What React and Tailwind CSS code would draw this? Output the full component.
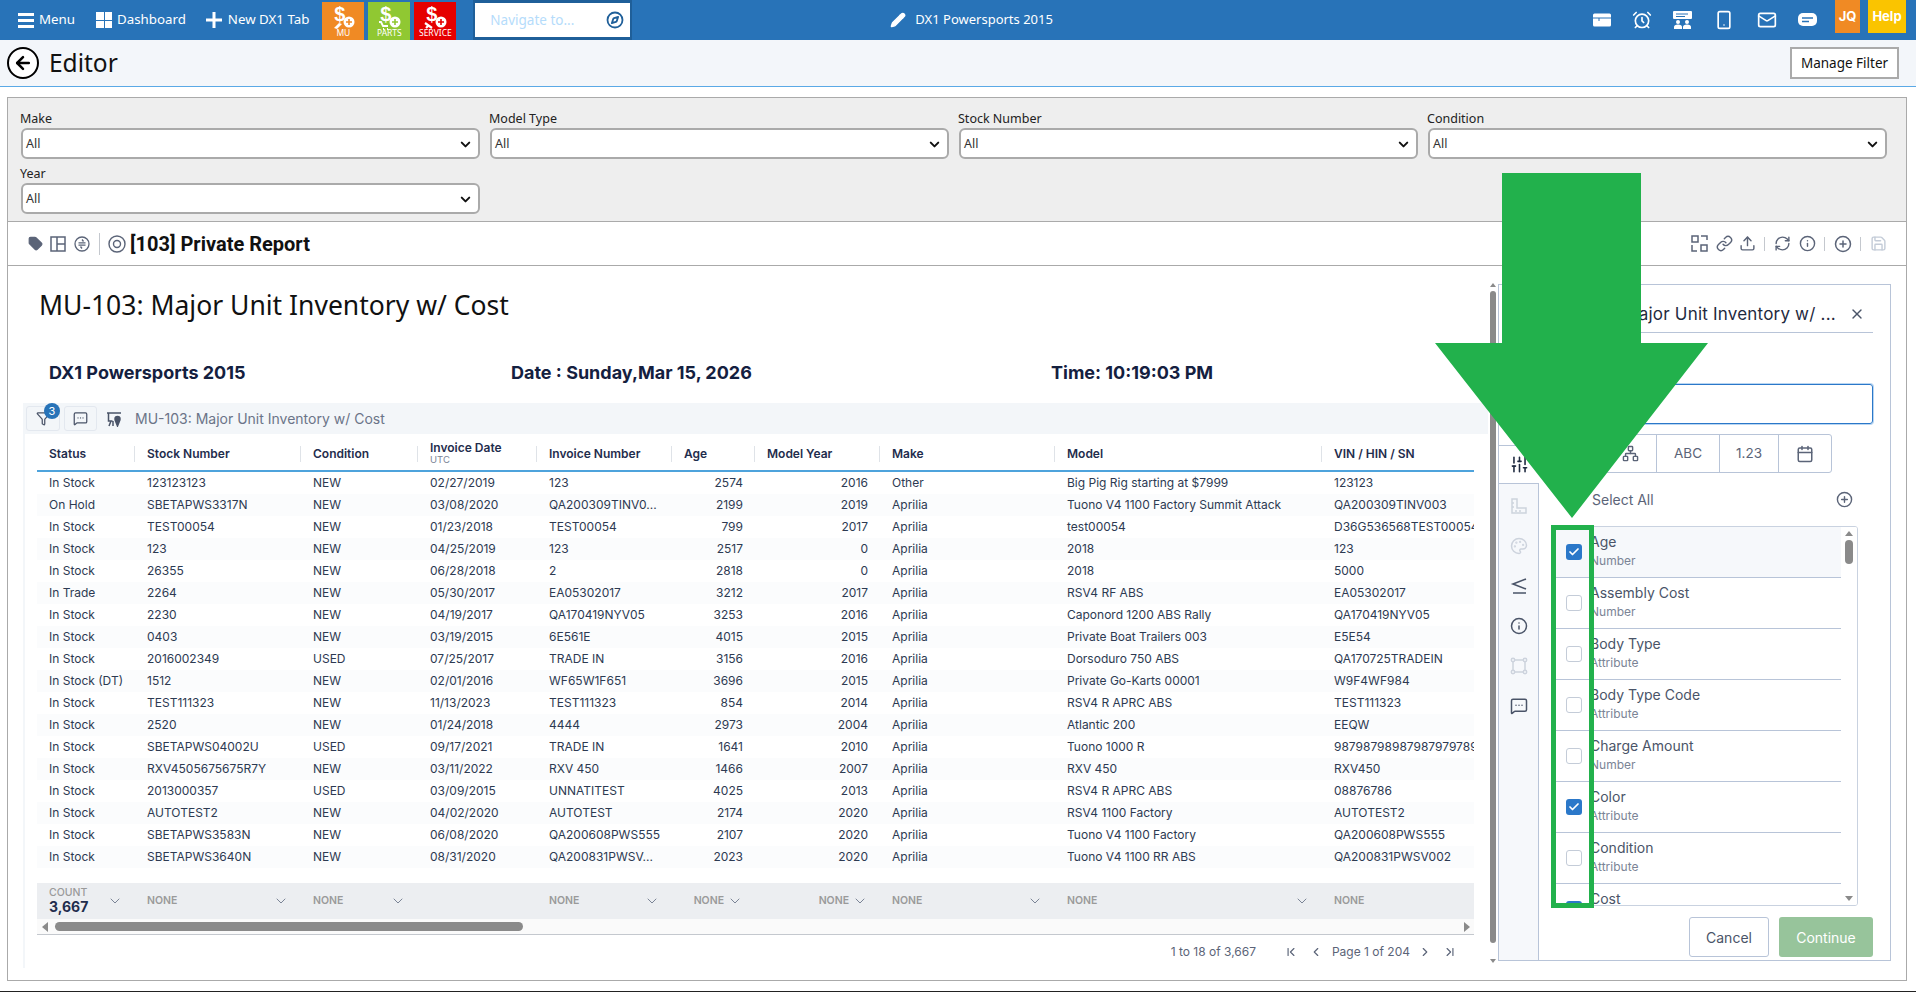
import React from "react";
import {
  AlarmClock, Smartphone, Mail, Compass, Link, Upload, RefreshCw, Info, CirclePlus, Save, X, Network, Calendar,
  SlidersVertical, Palette, MessageSquareMore, Funnel, ChevronDown, ChevronFirst, ChevronLast,
  ChevronLeft, ChevronRight, Check, ArrowLeft, Pencil, Tag,
} from "lucide-react";

const rows = [
  ["In Stock","123123123","NEW","02/27/2019","123","2574","2016","Other","Big Pig Rig starting at $7999","123123"],
  ["On Hold","SBETAPWS3317N","NEW","03/08/2020","QA200309TINV0...","2199","2019","Aprilia","Tuono V4 1100 Factory Summit Attack","QA200309TINV003"],
  ["In Stock","TEST00054","NEW","01/23/2018","TEST00054","799","2017","Aprilia","test00054","D36G536568TEST00054"],
  ["In Stock","123","NEW","04/25/2019","123","2517","0","Aprilia","2018","123"],
  ["In Stock","26355","NEW","06/28/2018","2","2818","0","Aprilia","2018","5000"],
  ["In Trade","2264","NEW","05/30/2017","EA05302017","3212","2017","Aprilia","RSV4 RF ABS","EA05302017"],
  ["In Stock","2230","NEW","04/19/2017","QA170419NYV05","3253","2016","Aprilia","Caponord 1200 ABS Rally","QA170419NYV05"],
  ["In Stock","0403","NEW","03/19/2015","6E561E","4015","2015","Aprilia","Private Boat Trailers 003","E5E54"],
  ["In Stock","2016002349","USED","07/25/2017","TRADE IN","3156","2016","Aprilia","Dorsoduro 750 ABS","QA170725TRADEIN"],
  ["In Stock (DT)","1512","NEW","02/01/2016","WF65W1F651","3696","2015","Aprilia","Private Go-Karts 00001","W9F4WF984"],
  ["In Stock","TEST111323","NEW","11/13/2023","TEST111323","854","2014","Aprilia","RSV4 R APRC ABS","TEST111323"],
  ["In Stock","2520","NEW","01/24/2018","4444","2973","2004","Aprilia","Atlantic 200","EEQW"],
  ["In Stock","SBETAPWS04002U","USED","09/17/2021","TRADE IN","1641","2010","Aprilia","Tuono 1000 R","98798798987987979789"],
  ["In Stock","RXV4505675675R7Y","NEW","03/11/2022","RXV 450","1466","2007","Aprilia","RXV 450","RXV450"],
  ["In Stock","2013000357","USED","03/09/2015","UNNATITEST","4025","2013","Aprilia","RSV4 R APRC ABS","08876786"],
  ["In Stock","AUTOTEST2","NEW","04/02/2020","AUTOTEST","2174","2020","Aprilia","RSV4 1100 Factory","AUTOTEST2"],
  ["In Stock","SBETAPWS3583N","NEW","06/08/2020","QA200608PWS555","2107","2020","Aprilia","Tuono V4 1100 Factory","QA200608PWS555"],
  ["In Stock","SBETAPWS3640N","NEW","08/31/2020","QA200831PWSV...","2023","2020","Aprilia","Tuono V4 1100 RR ABS","QA200831PWSV002"],
];

const heads = ["Status","Stock Number","Condition","Invoice Date","Invoice Number","Age","Model Year","Make","Model","VIN / HIN / SN"];
const fields = [
  ["Age","Number",true],["Assembly Cost","Number",false],["Body Type","Attribute",false],["Body Type Code","Attribute",false],
  ["Charge Amount","Number",false],["Color","Attribute",true],["Condition","Attribute",false],["Cost","Number",true],
];
const gridCols = "grid grid-cols-[98px_166px_117px_119px_135px_83px_125px_175px_267px_152px]";

function Tile({ bg, label, kind, stroke }) {
  return (
    <div className={`relative flex h-[38px] w-[42px] flex-col items-center justify-end ${bg} pb-[2px]`}>
      <span className="absolute left-[12px] top-[2px] font-['Liberation_Sans'] text-[20px] font-bold leading-[20px] text-white">$</span>
      <svg className="absolute left-[10px] top-[13px]" width="28" height="16" viewBox="0 0 28 16">
        {kind === "mu" && <path d="M2 13 L7 8 L10 9 L5 14Z" fill="#fff" />}
        {kind === "parts" && <path d="M1 7h2l2 4h5M5 14h1M9 14h1" stroke="#fff" strokeWidth="1.800" fill="none" />}
        {kind === "service" && <path d="M1 8l7 5M2 13l3-3" stroke="#fff" strokeWidth="2.200" fill="none" />}
        <circle cx="17" cy="7" r="5.500" fill="#fff" />
        <path d="M14 7h6M17 4v6" stroke={stroke} strokeWidth="1.600" />
      </svg>
      <span className="font-['Noto_Sans'] text-[8.500px] leading-[10px] text-white">{label}</span>
    </div>
  );
}

function SelectField({ label }) {
  return (
    <div className="flex flex-col">
      <label className="-ml-[1px] h-[20px] pt-[1px] font-['Noto_Sans'] text-[12.500px] leading-[19px] text-[#222]">{label}</label>
      <div className="flex h-[31px] items-center justify-between rounded-md border-2 border-[#aaaaaa] bg-white pl-[3px] pr-[5px] pt-[1px] font-['Noto_Sans'] text-[12.500px] text-[#333]">
        <span>All</span>
        <ChevronDown size={15} strokeWidth={3.200} className="text-[#111]" />
      </div>
    </div>
  );
}

function Frame({ size = 18, color = "#cdd3dd" }) {
  return (
    <svg width={size} height={size} viewBox="0 0 18 18" fill="none" stroke={color} strokeWidth="1.500">
      <rect x="3" y="3" width="12" height="12" />
      <circle cx="3" cy="3" r="1.700" fill="#f6f8fb" /><circle cx="15" cy="3" r="1.700" fill="#f6f8fb" />
      <circle cx="3" cy="15" r="1.700" fill="#f6f8fb" /><circle cx="15" cy="15" r="1.700" fill="#f6f8fb" />
    </svg>
  );
}

function FieldRow({ name, type, checked, first }) {
  return (
    <div className={`flex h-[51px] shrink-0 items-start border-b border-[#b8c4d8] pl-[13px] ${first ? "bg-[#f6f8fb]" : "bg-white"}`}>
      {checked ? (
        <div className="mt-[17px] flex h-[16px] w-[16px] items-center justify-center rounded-[3px] bg-[#2b78c9]">
          <Check size={12} strokeWidth={3.500} className="text-white" />
        </div>
      ) : (
        <div className="mt-[17px] h-[16px] w-[16px] rounded-[3px] border border-[#c4ccd8] bg-white" />
      )}
      <div className="ml-[8px] pt-[6px] font-[Inter]">
        <div className="text-[14px] leading-[18px] text-[#4a5468]">{name}</div>
        <div className="mt-[2px] text-[12px] leading-[16px] text-[#7b8496]">{type}</div>
      </div>
    </div>
  );
}

function SidePanel() {
  return (
    <div className="flex h-[677px] w-[393px] shrink-0 border border-[#b8c4d8] bg-white">
      <div className="flex w-[40px] shrink-0 flex-col">
        <div className="h-[160px] shrink-0" />
        <div className="flex h-[39px] shrink-0 items-center justify-center border-y border-[#b8c4d8]">
          <SlidersVertical size={19} className="text-[#1f2a40]" />
        </div>
        <div className="flex flex-1 flex-col items-center gap-[22px] border-r border-[#b8c4d8] bg-[#f6f8fb] pt-[13px]">
          <svg width="18" height="18" viewBox="0 0 18 18" fill="none" stroke="#cdd3dd" strokeWidth="1.500">
            <path d="M2 2h5v9h9v5H2z" /><path d="M2 6h2M2 10h2M6 13v2M10 13v2" />
          </svg>
          <Palette size={18} className="text-[#cdd3dd]" />
          <svg width="18" height="18" viewBox="0 0 18 18" fill="none" stroke="#4a5468" strokeWidth="1.600">
            <path d="M16 2 3 7l13 5M3 16h13" />
          </svg>
          <Info size={18} className="text-[#4a5468]" />
          <Frame />
          <MessageSquareMore size={18} className="text-[#4a5468]" />
        </div>
      </div>
      <div className="flex min-w-0 flex-1 flex-col pl-[13px] pr-[17px] font-[Inter]">
        <div className="flex h-[48px] shrink-0 items-end justify-between border-b border-[#b8c4d8] pb-[6px] pr-[8px] text-[17px] leading-[24px] tracking-[0.2px] text-[#1f2a40]">
          <span className="-ml-[4px] whitespace-nowrap">MU-103: Major Unit Inventory w/ ...</span>
          <X size={16} className="mb-[4px] text-[#4a5468]" />
        </div>
        <div className="mt-[51px] h-[40px] shrink-0 rounded-[3px] border border-[#2b78c9] shadow-[0_0_0_1px_#b9d6f2]" />
        <div className="mt-[10px] flex h-[39px] w-[280px] shrink-0 rounded-[3px] border border-[#b8c4d8] text-[13.500px] text-[#5b6478]">
          <div className="w-[52px] border-r border-[#b8c4d8]" />
          <div className="flex w-[52px] items-center justify-center border-r border-[#b8c4d8]"><Network size={17} /></div>
          <div className="flex w-[63px] items-center justify-center border-r border-[#b8c4d8]">ABC</div>
          <div className="flex w-[59px] items-center justify-center border-r border-[#b8c4d8]">1.23</div>
          <div className="flex flex-1 items-center justify-center"><Calendar size={18} /></div>
        </div>
        <div className="flex h-[53px] shrink-0 items-center justify-between pl-[40px] pr-[20px] text-[14px] text-[#5b6478]">
          <span>Select All</span>
          <CirclePlus size={17} />
        </div>
        <div className="flex h-[380px] w-[306px] shrink-0 overflow-hidden rounded-[3px] border border-[#c9d2e0]">
          <div className="flex min-w-0 flex-1 flex-col">
            {fields.map((f, i) => <FieldRow key={f[0]} name={f[0]} type={f[1]} checked={f[2]} first={i === 0} />)}
          </div>
          <div className="flex w-[16px] shrink-0 flex-col items-center bg-white pt-[3px]">
            <div className="mt-[1px] h-0 w-0 border-x-[4px] border-b-[5px] border-x-transparent border-b-[#8a8a8a]" />
            <div className="mt-[4px] h-[24px] w-[8px] rounded-full bg-[#8a8a8a]" />
            <div className="mt-auto mb-[4px] h-0 w-0 border-x-[4px] border-t-[5px] border-x-transparent border-t-[#8a8a8a]" />
          </div>
        </div>
        <div className="mt-[11px] flex shrink-0 justify-end gap-[10px] text-[14px]">
          <button className="h-[40px] w-[80px] rounded-[3px] border border-[#b8c4d8] bg-white text-[#4a5468]">Cancel</button>
          <button className="h-[40px] w-[94px] rounded-[3px] bg-[#97c49b] text-white">Continue</button>
        </div>
      </div>
    </div>
  );
}

function DataTable() {
  return (
    <div className="ml-[15px] flex w-[1465px] flex-col border-l-2 border-[#f3f6f9] font-[Inter]">
      <div className="flex h-[31px] items-center bg-[#f3f6f9]">
        <div className="relative ml-[1px] flex h-[25px] w-[34px] items-center justify-center rounded-[3px] border border-[#e3e8ef]">
          <Funnel size={15} className="text-[#4a5468]" />
          <span className="absolute right-[-1px] top-[-4px] flex h-[16px] w-[16px] items-center justify-center rounded-full bg-[#2873b8] text-[11px] text-white">3</span>
        </div>
        <div className="ml-[4px] flex h-[25px] w-[33px] items-center justify-center rounded-[3px] border border-[#e3e8ef]">
          <MessageSquareMore size={15} className="text-[#4a5468]" />
        </div>
        <svg className="ml-[9px]" width="16" height="16" viewBox="0 0 16 16" fill="none" stroke="#4a5468" strokeWidth="1.500">
          <path d="M1 2h14M2.500 2v8h4M5 10l-2 5M7 10v5" />
          <circle cx="11.500" cy="8" r="2.500" fill="#4a5468" />
          <path d="M9.500 10l2 5 2-5" fill="#4a5468" />
        </svg>
        <span className="ml-[13px] text-[14px] text-[#6b7488]">MU-103: Major Unit Inventory w/ Cost</span>
      </div>
      <div className="ml-[12px] w-[1437px]">
        <div className={`${gridCols} h-[38px] items-center border-b-2 border-[#4ea3dc] pt-[3px]`}>
          {heads.map((h, i) => (
            <div key={h} className={`flex h-[16px] items-center pl-[12px] text-[12px] font-semibold text-[#1f2d4d] ${i < 9 ? "border-r border-[#dfe3e8]" : ""}`}>
              {h === "Invoice Date" ? (
                <div className="leading-[12px]">
                  <div>{h}</div>
                  <div className="text-[9.500px] font-normal text-[#7b8496]">UTC</div>
                </div>
              ) : h}
            </div>
          ))}
        </div>
        {rows.map((r, i) => (
          <div key={i} className={`${gridCols} h-[22px] items-center text-[12px] text-[#2d3a52] ${i % 2 ? "bg-[#fbfcfd]" : "bg-white"}`}>
            {r.map((c, j) => (
              <div key={j} className={`overflow-hidden whitespace-nowrap pl-[12px] ${j === 5 || j === 6 ? "pr-[12px] text-right" : ""}`}>{c}</div>
            ))}
          </div>
        ))}
        <div className={`${gridCols} mt-[15px] h-[36px] items-center bg-[#eceef1] text-[10.500px] font-semibold text-[#9a9a9a]`}>
          <div className="flex items-center justify-between pl-[12px] pr-[12px]">
            <div className="leading-[12px]">
              <div className="font-medium">COUNT</div>
              <div className="text-[14px] font-bold leading-[16px] text-[#1f2d4d]">3,667</div>
            </div>
            <ChevronDown size={16} strokeWidth={1.500} className="text-[#7b8496]" />
          </div>
          {[1,2,3,4,5,6,7,8,9].map((j) => (
            <div key={j} className={`flex items-center pl-[12px] pr-[12px] ${j === 5 || j === 6 ? "justify-end gap-[3px]" : "justify-between"}`}>
              {j !== 3 && <span>NONE</span>}
              {j !== 3 && j !== 9 && <ChevronDown size={16} strokeWidth={1.500} className="text-[#7b8496]" />}
            </div>
          ))}
        </div>
        <div className="flex h-[16px] items-center border-b border-[#c4c8ce] bg-[#fafafa] pl-[5px] pr-[4px]">
          <div className="h-0 w-0 border-y-[5px] border-r-[6px] border-y-transparent border-r-[#8a8a8a]" />
          <div className="ml-[7px] h-[9px] w-[468px] rounded-full bg-[#8a8a8a]" />
          <div className="ml-auto h-0 w-0 border-y-[5px] border-l-[6px] border-y-transparent border-l-[#8a8a8a]" />
        </div>
        <div className="flex h-[33px] items-center justify-end pr-[17px] text-[12px] text-[#5b6478]">
          <span>1 to 18 of 3,667</span>
          <ChevronFirst size={14} className="ml-[28px]" />
          <ChevronLeft size={14} className="ml-[11px]" />
          <span className="ml-[9px]">Page 1 of 204</span>
          <ChevronRight size={14} className="ml-[8px]" />
          <ChevronLast size={14} className="ml-[11px]" />
        </div>
      </div>
    </div>
  );
}

export default function App() {
  return (
    <div className="relative h-[992px] w-[1916px] overflow-hidden border-b border-[#222] bg-white font-['Noto_Sans']">
      <header className="flex h-[40px] items-start bg-[#2873b8] text-white">
        <div className="flex h-[40px] items-center text-[13.300px]">
          <div className="ml-[18px] flex w-[16px] flex-col gap-[3px]">
            <span className="h-[3px] bg-white" /><span className="h-[3px] bg-white" /><span className="h-[3px] bg-white" />
          </div>
          <span className="ml-[5px]">Menu</span>
          <div className="ml-[21px] grid h-[16px] w-[16px] grid-cols-2 gap-[1px]">
            <span className="bg-white" /><span className="bg-white" /><span className="bg-white" /><span className="bg-white" />
          </div>
          <span className="ml-[5px]">Dashboard</span>
          <svg className="ml-[20px]" width="16" height="16" viewBox="0 0 16 16"><path d="M6.500 0h3v6.500H16v3H9.500V16h-3V9.500H0v-3h6.500z" fill="#fff" /></svg>
          <span className="ml-[6px]">New DX1 Tab</span>
        </div>
        <div className="ml-[13px] mt-[2px] flex gap-[4px]">
          <Tile bg="bg-[#f08a24]" label="MU" kind="mu" stroke="#f08a24" />
          <Tile bg="bg-[#90c832]" label="PARTS" kind="parts" stroke="#90c832" />
          <Tile bg="bg-[#e50000]" label="SERVICE" kind="service" stroke="#e50000" />
        </div>
        <div className="ml-[17px] flex h-[40px] w-[159px] items-center justify-between border-x-2 border-t-[3px] border-b-[3px] border-[#1f5f99] bg-white pl-[15px] pr-[6px]">
          <span className="text-[13.500px] text-[#b5dcfb]">Navigate to...</span>
          <Compass size={18} className="text-[#1f5f99]" strokeWidth={2.400} />
        </div>
        <div className="ml-[258px] flex h-[40px] items-center text-[13px]">
          <Pencil size={16} fill="#fff" className="text-white" />
          <span className="ml-[9px]">DX1 Powersports 2015</span>
        </div>
        <div className="ml-auto flex h-[40px] items-center pr-[10px]">
          <svg width="18" height="14" viewBox="0 0 18 14"><rect y="0.500" width="18" height="13" rx="1.500" fill="#fff" /><path d="M0 5h18M6 5v3" stroke="#2873b8" /></svg>
          <AlarmClock size={20} className="ml-[21px]" />
          <svg className="ml-[21px]" width="19" height="18" viewBox="0 0 19 18">
            <rect width="19" height="8" rx="1" fill="#fff" /><path d="M3 3h12M3 5.500h9" stroke="#2873b8" />
            <circle cx="5" cy="11" r="2" fill="#fff" /><circle cx="14" cy="11" r="2" fill="#fff" />
            <path d="M1 18v-2q0-2.500 4-2.500t4 2.500v2zM10 18v-2q0-2.500 4-2.500t4 2.500v2z" fill="#fff" />
          </svg>
          <Smartphone size={20} className="ml-[22px]" />
          <Mail size={20} className="ml-[23px]" />
          <svg className="ml-[21px]" width="19" height="15" viewBox="0 0 19 15"><rect width="19" height="13" rx="5" fill="#fff" /><path d="M4 5h11M4 8.500h7" stroke="#2873b8" strokeWidth="1.400" /></svg>
          <div className="ml-[18px] mb-[7px] flex h-[33px] w-[25px] items-center justify-center bg-[#f08a24] font-[Inter] text-[13px] font-bold">JQ</div>
          <div className="ml-[8px] mb-[7px] flex h-[33px] w-[38px] items-center justify-center bg-[#fac400] font-[Inter] text-[13px] font-bold">Help</div>
        </div>
      </header>

      <div className="flex h-[47px] items-center border-b border-[#5aa9e6] bg-[#f3f6fa] pl-[7px] pr-[17px]">
        <div className="flex h-[32px] w-[32px] items-center justify-center rounded-full border-2 border-black bg-white">
          <ArrowLeft size={20} strokeWidth={3} className="text-black" />
        </div>
        <span className="ml-[10px] text-[24.500px] text-[#111]">Editor</span>
        <button className="ml-auto h-[32px] w-[109px] border-2 border-[#aaaaaa] bg-white text-[13.500px] text-[#111]">Manage Filter</button>
      </div>

      <div className="ml-[7px] mt-[10px] w-[1900px] border border-[#aaaaaa]">
        <div className="grid h-[124px] grid-cols-4 content-start gap-x-[10px] gap-y-[4px] border-b border-[#aaaaaa] bg-[#eeeeee] pl-[13px] pr-[19px] pt-[10px]">
          <SelectField label="Make" />
          <SelectField label="Model Type" />
          <SelectField label="Stock Number" />
          <SelectField label="Condition" />
          <SelectField label="Year" />
        </div>

        <div className="flex h-[44px] items-center border-b border-[#aaaaaa] pl-[20px] pr-[19px] text-[#5b6478]">
          <Tag size={15} fill="#5b6478" />
          <svg className="ml-[7px]" width="16" height="16" viewBox="0 0 16 16" fill="none" stroke="#5b6478" strokeWidth="1.500"><rect x="1" y="1" width="14" height="14" /><path d="M7 1v14M7 8h8" /></svg>
          <svg className="ml-[8px]" width="16" height="16" viewBox="0 0 16 16" fill="none" stroke="#5b6478" strokeWidth="1.300"><circle cx="8" cy="8" r="7" /><path d="M4.500 6.800h7M4.500 9.200h7M8 3.500l1.500 2M8 12.500l-1.500-2" /></svg>
          <span className="ml-[9px] h-[22px] w-px bg-[#c4c8ce]" />
          <svg className="ml-[8px]" width="18" height="18" viewBox="0 0 18 18" fill="none" stroke="#5b6478" strokeWidth="1.400"><circle cx="9" cy="9" r="8" /><circle cx="9" cy="9" r="3.500" /></svg>
          <span className="ml-[4px] font-[Roboto] text-[20px] font-bold text-[#111]">[103] Private Report</span>
          <div className="ml-auto flex items-center">
            <svg width="17" height="17" viewBox="0 0 17 17" fill="none" stroke="#5b6478" strokeWidth="1.500"><rect x="1" y="1" width="6" height="6" /><rect x="10" y="10" width="6" height="6" /><path d="M10 1h6v4M1 10v6h5" /></svg>
            <Link size={17} className="ml-[8px]" />
            <Upload size={17} className="ml-[6px]" />
            <span className="ml-[8px] h-[14px] w-px bg-[#c4c8ce]" />
            <RefreshCw size={17} className="ml-[9px]" />
            <Info size={17} className="ml-[8px]" />
            <span className="ml-[8px] h-[14px] w-px bg-[#c4c8ce]" />
            <CirclePlus size={18} className="ml-[9px]" />
            <span className="ml-[8px] h-[14px] w-px bg-[#c4c8ce]" />
            <Save size={17} className="ml-[9px] text-[#c4ccd8]" />
          </div>
        </div>

        <div className="flex h-[714px] items-start">
          <div className="w-[1479px] shrink-0">
            <h1 className="ml-[31px] mt-[21px] h-[36px] text-[26.500px] font-normal leading-[36px] text-[#111]">MU-103: Major Unit Inventory w/ Cost</h1>
            <div className="ml-[41px] mt-[38px] flex h-[24px] items-center font-[Inter] text-[18px] font-bold leading-[24px] text-[#14203f]">
              <span className="w-[462px]">DX1 Powersports 2015</span>
              <span className="w-[540px]">Date : Sunday,Mar 15, 2026</span>
              <span>Time: 10:19:03 PM</span>
            </div>
            <div className="mt-[18px]"><DataTable /></div>
          </div>
          <div className="mt-[17px] flex h-[680px] w-[11px] shrink-0 flex-col items-center">
            <div className="h-0 w-0 border-x-[3px] border-b-[4px] border-x-transparent border-b-[#8a8a8a]" />
            <div className="mt-[4px] h-[652px] w-[6px] rounded-full bg-[#8a8a8a]" />
            <div className="mt-auto h-0 w-0 border-x-[3px] border-t-[4px] border-x-transparent border-t-[#8a8a8a]" />
          </div>
          <div className="mt-[18px]"><SidePanel /></div>
        </div>
      </div>

      <svg className="pointer-events-none absolute left-[1435px] top-[173px]" width="273" height="345" viewBox="0 0 273 345">
        <polygon points="67,0 206,0 206,170 273,170 137,345 0,170 67,170" fill="#22b14c" />
      </svg>
      <div className="pointer-events-none absolute left-[1551px] top-[525px] h-[383px] w-[43px] border-[5px] border-[#22b14c]" />
    </div>
  );
}
